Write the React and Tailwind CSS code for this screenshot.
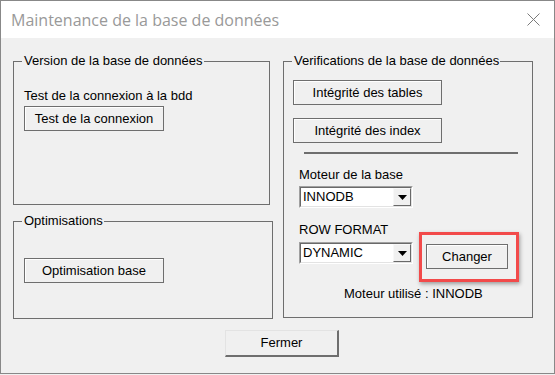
const font = { fontFamily: '"Liberation Sans", Arial, sans-serif' };

function Button({ label, className }) {
  return (
    <button
      className={
        "flex items-center justify-center border border-[#6e6e6e] bg-[#f0f0f0] shadow-[inset_1px_1px_0_#ffffff] text-[13px] leading-[16px] text-black " +
        className
      }
    >
      {label}
    </button>
  );
}

function Combo({ value, className }) {
  return (
    <div
      className={
        "flex border border-t-[#a0a0a0] border-l-[#a0a0a0] border-b-[#ffffff] border-r-[#ffffff] bg-white " +
        className
      }
    >
      <div className="flex flex-1 items-stretch border border-t-[#696969] border-l-[#696969] border-b-[#e3e3e3] border-r-[#e3e3e3]">
        <div className="flex flex-1 items-center pl-[2px] text-[13px] text-black">{value}</div>
        <div className="flex w-[18px] items-center justify-center border border-t-[#f8f8f8] border-l-[#f8f8f8] border-b-[#696969] border-r-[#696969] bg-[#f0f0f0]">
          <svg width="9" height="5" viewBox="0 0 9 5">
            <path d="M0 0h9L4.5 5z" fill="#000" />
          </svg>
        </div>
      </div>
    </div>
  );
}

function Group({ title, className, bodyClass, children }) {
  return (
    <fieldset className={"border border-[#6e6e6e] " + className}>
      <legend className="ml-[8px] pl-[2px] pr-[1px] text-[13px] leading-[16px] text-black">
        {title}
      </legend>
      <div className={bodyClass}>{children}</div>
    </fieldset>
  );
}

export default function App() {
  return (
    <div className="h-[375px] w-[555px] bg-[#f0f0f0]" style={font}>
      <div className="flex h-[374px] w-[555px] flex-col border border-[#888888] bg-[#f0f0f0]">
        <div className="flex h-[37px] items-center justify-between bg-white pl-[10px] pr-[14px]">
          <span
            className="text-[16px] leading-[20px] text-[#999999]"
            style={{ fontFamily: '"Open Sans", "Noto Sans", sans-serif' }}
          >
            Maintenance de la base de données
          </span>
          <svg width="13" height="13" viewBox="0 0 13 13">
            <path d="M0.5 0.5l12 12M12.5 0.5l-12 12" stroke="#7a7a7a" strokeWidth="1" />
          </svg>
        </div>

        <div className="flex flex-1 flex-col pl-[12px] pt-[15px]">
          <div className="flex gap-[10px]">
            <div className="flex w-[260px] flex-col gap-[8px]">
              <Group
                title="Version de la base de données"
                className="h-[152px] w-[257px]"
                bodyClass="pl-[10px] pt-[19px]"
              >
                <div className="text-[13px] leading-[16px] text-black">Test de la connexion à la bdd</div>
                <Button label="Test de la connexion" className="mt-[2px] h-[25px] w-[140px]" />
              </Group>
              <Group title="Optimisations" className="h-[106px] w-[260px]" bodyClass="pl-[10px] pt-[29px]">
                <Button label="Optimisation base" className="h-[25px] w-[140px]" />
              </Group>
            </div>

            <Group
              title="Verifications de la base de données"
              className="h-[265px] w-[250px]"
              bodyClass="pl-[9px] pt-[11px]"
            >
              <Button label="Intégrité des tables" className="h-[25px] w-[149px]" />
              <Button label="Intégrité des index" className="mt-[13px] h-[25px] w-[149px]" />
              <div className="ml-[11px] mt-[9px] h-[2px] w-[214px] bg-[#6e6e6e]" />

              <div className="pl-[6px]">
                <div className="mt-[13px] text-[13px] leading-[16px] text-black">Moteur de la base</div>
                <Combo value="INNODB" className="mt-[3px] h-[22px] w-[114px]" />
                <div className="mt-[14px] text-[13px] leading-[16px] text-black">ROW FORMAT</div>
                <div className="mt-[4px] flex items-start gap-[13px]">
                  <Combo value="DYNAMIC" className="h-[22px] w-[114px]" />
                  <div className="relative mt-[2px]">
                    <Button label="Changer" className="h-[25px] w-[82px]" />
                    <div className="pointer-events-none absolute left-[-7px] top-[-12px] h-[50px] w-[100px] border-[3px] border-[#f24a4a] shadow-[1px_2px_4px_rgba(0,0,0,0.35)]" />
                  </div>
                </div>
              </div>
              <div className="mt-[17px] pl-[51px] text-[13px] leading-[16px] text-black">
                Moteur utilisé : INNODB
              </div>
            </Group>
          </div>

          <button className="ml-[212px] mt-[11px] flex h-[27px] w-[114px] items-center justify-center border border-t-[#e3e3e3] border-l-[#e3e3e3] border-b-2 border-r-2 border-b-[#6e6e6e] border-r-[#6e6e6e] bg-[#f0f0f0] text-[13px] text-black">
            Fermer
          </button>
        </div>
      </div>
    </div>
  );
}
